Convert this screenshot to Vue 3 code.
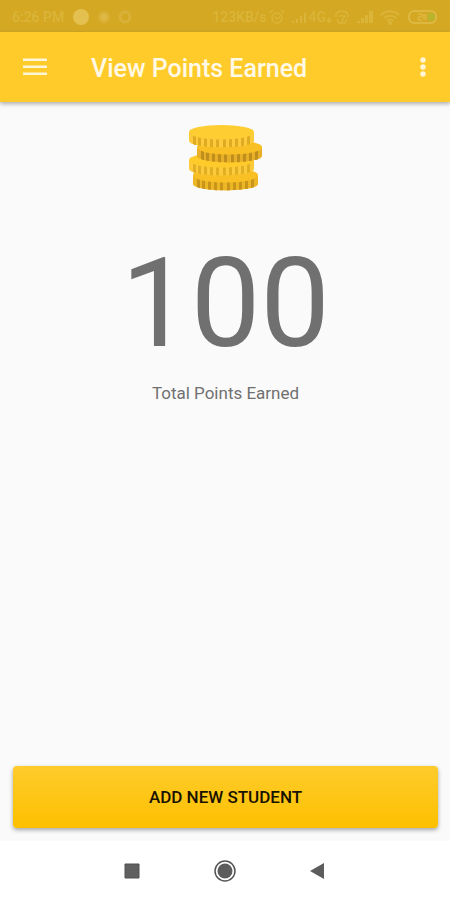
<script setup>
const points = 100

// Coins are listed bottom to top, so that each one covers the one below it.
const coins = [
  { x: 4, y: 50, face: '#f8c024', side: '#edb624', ridge: '#c8951a' },
  { x: 0, y: 35, face: '#fecb2b', side: '#fccb3c', ridge: '#e2ae22' },
  { x: 8, y: 22, face: '#f8c024', side: '#e8b028', ridge: '#c08e1a' },
  { x: 0, y: 7, face: '#fdcd32', side: '#fccb3c', ridge: '#dfab22' },
]
const ridges = [4, 9, 15, 21, 27, 34, 40, 46, 52, 58]
</script>

<template>
  <div class="screen">
    <div class="status">
      <span class="clock">6:26 PM</span>
      <svg class="notes" width="62" height="18" viewBox="0 0 62 18" aria-hidden="true">
        <circle cx="9" cy="9" r="8" fill="#e3c04f" />
        <circle cx="32" cy="9" r="6" fill="#dab138" />
        <circle cx="32" cy="9" r="3" fill="#deb945" />
        <circle cx="53" cy="9" r="5" fill="none" stroke="#dab138" stroke-width="3" />
      </svg>
      <span class="rate">123KB/s</span>
      <svg width="16" height="16" viewBox="0 0 16 16" fill="none" stroke="currentColor" stroke-width="1.5" aria-hidden="true">
        <circle cx="8" cy="9" r="5" /><path d="M1 4l3-3M15 4l-3-3M5.500 8L8 10l3-2" />
      </svg>
      <svg class="signal" width="16" height="16" viewBox="0 0 16 16" fill="currentColor" aria-hidden="true">
        <path d="M1 12h2v2H1zM5 10h2v4H5zM9 7h2v7H9zM13 4h2v10h-2z" />
      </svg>
      <span class="net">4G</span>
      <svg width="8" height="16" viewBox="0 0 8 16" fill="none" stroke="currentColor" stroke-width="1.5" aria-hidden="true">
        <path d="M3 8v5M1 11l2 2 2-2" />
      </svg>
      <svg width="16" height="16" viewBox="0 0 16 16" fill="none" stroke="currentColor" stroke-width="1.500" aria-hidden="true">
        <path d="M2 5c3-4 9-4 12 0M2 5v3M14 5v3M5 7h6l-4 7M3 10l2 4h6l2-4" />
      </svg>
      <svg class="signal2" width="18" height="16" viewBox="0 0 18 16" fill="currentColor" aria-hidden="true">
        <path d="M1 12h3v2H1zM5 9h3v5H5zM9 6h3v8H9zM13 2h4v12h-4z" />
      </svg>
      <svg width="20" height="16" viewBox="0 0 20 16" fill="none" stroke="currentColor" stroke-width="2" aria-hidden="true">
        <path d="M1 6c5-5 13-5 18 0M4 9c3-3 9-3 12 0M7 12c2-2 4-2 6 0" /><circle cx="10" cy="14" r="1" />
      </svg>
      <svg class="battery" width="30" height="16" viewBox="0 0 30 16" aria-hidden="true">
        <rect x="1" y="2" width="27" height="12" rx="5" fill="none" stroke="#dfbd4b" stroke-width="1.5" />
        <path d="M20 4h3a4 4 0 0 1 0 8h-3z" fill="#b8b52c" />
        <path d="M10 5h4v3h-4v3h4M16 5v6M18 5v6" fill="none" stroke="#dfbd4b" />
      </svg>
    </div>

    <header class="bar">
      <button class="icon" type="button" aria-label="Menu">
        <svg width="24" height="18" viewBox="0 0 24 18" fill="#fff6d6" aria-hidden="true">
          <path d="M0 .5h24v2.500H0zM0 7.500h24v2.500H0zM0 14.500h24v2.500H0z" />
        </svg>
      </button>
      <h1>View Points Earned</h1>
      <button class="icon more" type="button" aria-label="More options">
        <svg width="6" height="20" viewBox="0 0 6 20" fill="#fff6d6" aria-hidden="true">
          <circle cx="3" cy="3" r="2.700" /><circle cx="3" cy="10" r="2.700" /><circle cx="3" cy="17" r="2.700" />
        </svg>
      </button>
    </header>

    <main>
      <svg class="coins" width="74" height="66" viewBox="0 0 74 66" aria-hidden="true">
        <defs>
          <clipPath id="coin-side">
            <path d="M0 0V9C1 17.500 64 17.500 65 9V0z" />
          </clipPath>
        </defs>
        <g v-for="coin in coins" :key="coin.y" :transform="`translate(${coin.x} ${coin.y})`">
          <path d="M0 0V9C1 17.500 64 17.500 65 9V0z" :fill="coin.side" />
          <g clip-path="url(#coin-side)">
            <rect v-for="r in ridges" :key="r" :x="r" y="0" width="3" height="16" :fill="coin.ridge" />
          </g>
          <path d="M0 0C1 10 64 10 65 0z" :fill="coin.face" />
          <ellipse cx="32.500" cy="0" rx="32.500" ry="7" :fill="coin.face" />
        </g>
      </svg>
      <p class="points">{{ points }}</p>
      <p class="label">Total Points Earned</p>
      <button class="add" type="button">ADD NEW STUDENT</button>
    </main>

    <nav class="system" aria-label="System navigation">
      <button type="button" aria-label="Recent apps">
        <svg width="24" height="24" viewBox="0 0 24 24" aria-hidden="true"><path d="M5 5h14v14H5z" fill="#606060" stroke="#505050" /></svg>
      </button>
      <button type="button" aria-label="Home">
        <svg width="24" height="24" viewBox="0 0 24 24" aria-hidden="true">
          <circle cx="12" cy="12" r="10" fill="none" stroke="#555" stroke-width="1.500" /><circle cx="12" cy="12" r="7.500" fill="#5c5c5c" />
        </svg>
      </button>
      <button type="button" aria-label="Back">
        <svg width="24" height="24" viewBox="0 0 24 24" aria-hidden="true"><path d="M4 12L18 4v16z" fill="#5c5c5c" /></svg>
      </button>
    </nav>
  </div>
</template>

<style>
body {
  margin: 0;
  background: #fafafa;
}
</style>

<style scoped>
.screen {
  display: flex;
  flex-direction: column;
  min-height: 100vh;
  font-family: Roboto, "Liberation Sans", sans-serif;
  background: #fafafa;
}
button {
  padding: 0;
  border: 0;
  background: none;
  font: inherit;
  cursor: pointer;
}
svg {
  display: block;
  flex: none;
}
.status {
  display: flex;
  align-items: center;
  box-sizing: border-box;
  height: 32px;
  padding: 2px 12px 0;
  background: #d4a823;
  color: #dbb539;
  font-size: 14px;
  font-weight: 500;
  white-space: nowrap;
}
.notes {
  margin-left: 8px;
}
.rate {
  margin-left: auto;
  margin-right: 2px;
}
.signal {
  margin: 0 2px 0 6px;
}
.signal2 {
  margin: 0 6px;
}
.battery {
  margin-left: 8px;
}
.bar {
  display: flex;
  align-items: center;
  height: 70px;
  padding: 0 15px 0 11px;
  background: #fecb2b;
  box-shadow: 0 2px 4px rgba(0, 0, 0, 0.3);
  color: #fff9e6;
}
.icon {
  display: flex;
  align-items: center;
  justify-content: center;
  width: 48px;
  height: 48px;
}
.more {
  width: 24px;
}
h1 {
  flex: 1;
  margin: 0 0 0 32px;
  padding-top: 4px;
  font-size: 25px;
  line-height: 32px;
  font-weight: 500;
}
main {
  flex: 1;
  display: flex;
  flex-direction: column;
  align-items: center;
  padding: 23px 12px 13px 13px;
  color: #707070;
}
.points {
  margin: 40px 0 0;
  font-size: 124px;
  line-height: 146px;
}
.label {
  margin: 4px 0 24px;
  font-size: 17px;
  line-height: 24px;
}
.add {
  align-self: stretch;
  height: 62px;
  margin-top: auto;
  border-radius: 4px;
  background: linear-gradient(#fecb2b, #fdc000);
  box-shadow: 0 2px 4px rgba(0, 0, 0, 0.35);
  color: #181200;
  font-size: 17px;
  font-weight: 500;
}
.system {
  display: flex;
  align-items: center;
  justify-content: center;
  gap: 45px;
  height: 59px;
  background: #fff;
}
.system button {
  display: flex;
  align-items: center;
  justify-content: center;
  width: 48px;
  height: 48px;
}
</style>
